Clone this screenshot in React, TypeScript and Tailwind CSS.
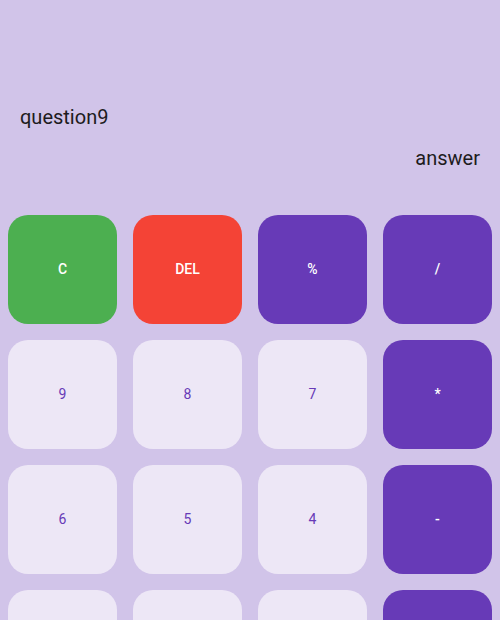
import React from "react";

const buttons = [
  "C", "DEL", "%", "/",
  "9", "8", "7", "*",
  "6", "5", "4", "-",
  "3", "2", "1", "+",
  "0", ".", "ANS", "=",
];

function styleFor(label: string, i: number) {
  if (i === 0) return "bg-[#4caf50] text-white font-medium";
  if (i === 1) return "bg-[#f44336] text-white font-medium";
  const isOp = ["%", "/", "*", "-", "+", "="].includes(label);
  if (isOp) return "bg-[#673ab7] text-white font-medium";
  return "bg-[#ede7f6] text-[#673ab7]";
}

export default function App() {
  return (
    <div
      className="h-[620px] w-[500px] overflow-hidden bg-[#d1c4e9] flex flex-col"
      style={{ fontFamily: "Roboto, 'Liberation Sans', sans-serif" }}
    >
      <div className="h-[207px] shrink-0 flex flex-col px-5 pt-[105px]">
        <div className="text-[20px] leading-[24px] text-[#1d1b20]">question9</div>
        <div className="mt-[17px] text-right text-[20px] leading-[24px] text-[#1d1b20]">answer</div>
      </div>
      <div className="grid grid-cols-4 gap-4 p-2">
        {buttons.map((b, i) => (
          <div
            key={i}
            className={`h-[109px] rounded-[20px] flex items-center justify-center text-[14px] ${styleFor(b, i)}`}
          >
            {b}
          </div>
        ))}
      </div>
    </div>
  );
}
